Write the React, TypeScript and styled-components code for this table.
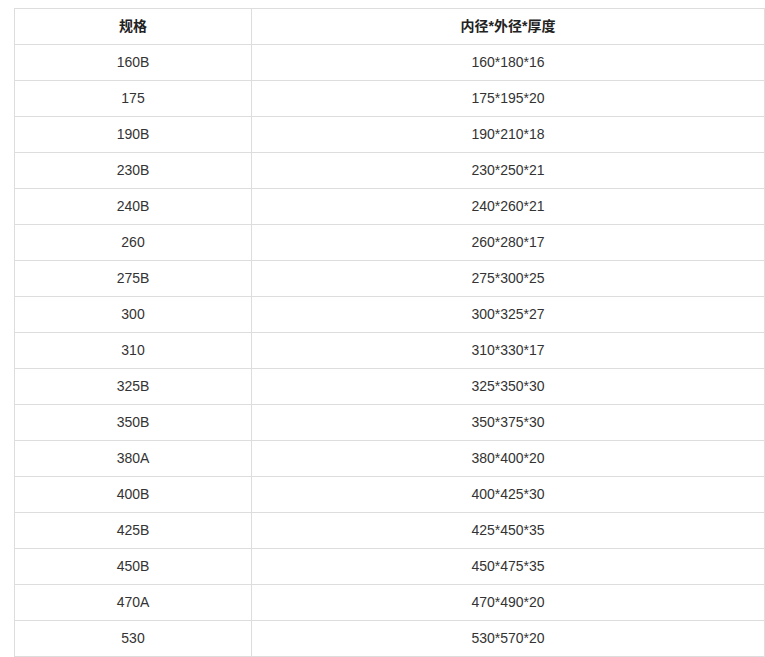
import React from "react";
import styled, { createGlobalStyle } from "styled-components";

const Global = createGlobalStyle`
  html, body { margin: 0; padding: 0; background: #fff; }
  body { font-family: "Liberation Sans", Arial, "Noto Sans CJK SC", sans-serif; }
`;

const Page = styled.div`
  padding: 8px 0 0 14px;
`;

const Table = styled.table`
  border-collapse: collapse;
  width: 751px;
  table-layout: fixed;
  font-size: 14px;
  color: #333;
`;

const Cell = styled.td<{ $head?: boolean }>`
  border: 1px solid #dddddd;
  height: ${(p) => (p.$head ? 32 : 34)}px;
  padding: 0 0 ${(p) => (p.$head ? 3 : 1)}px;
  text-align: center;
  vertical-align: middle;
  font-weight: ${(p) => (p.$head ? 700 : 400)};
  color: ${(p) => (p.$head ? "#222" : "#333")};
`;

const rows: [string, string][] = [
  ["160B", "160*180*16"],
  ["175", "175*195*20"],
  ["190B", "190*210*18"],
  ["230B", "230*250*21"],
  ["240B", "240*260*21"],
  ["260", "260*280*17"],
  ["275B", "275*300*25"],
  ["300", "300*325*27"],
  ["310", "310*330*17"],
  ["325B", "325*350*30"],
  ["350B", "350*375*30"],
  ["380A", "380*400*20"],
  ["400B", "400*425*30"],
  ["425B", "425*450*35"],
  ["450B", "450*475*35"],
  ["470A", "470*490*20"],
  ["530", "530*570*20"],
];

export default function App() {
  return (
    <Page>
      <Global />
      <Table>
        <colgroup>
          <col style={{ width: 237 }} />
          <col />
        </colgroup>
        <tbody>
          <tr>
            <Cell $head>规格</Cell>
            <Cell $head>内径*外径*厚度</Cell>
          </tr>
          {rows.map(([a, b]) => (
            <tr key={a}>
              <Cell>{a}</Cell>
              <Cell>{b}</Cell>
            </tr>
          ))}
        </tbody>
      </Table>
    </Page>
  );
}
